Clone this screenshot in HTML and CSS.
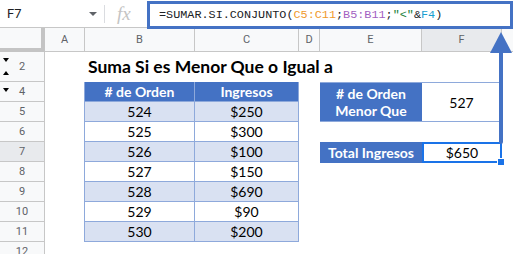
FILE: index.html
```html
<!DOCTYPE html>
<html>
<head>
<meta charset="UTF-8">
<title>Suma Si es Menor Que o Igual a</title>
<link rel="stylesheet" href="styles.css">
</head>
<body>
<div class="page">
  <div class="toolbar">
    <div class="namebox">
      <span class="ref">F7</span>
      <span class="caret"></span>
    </div>
    <div class="sep"></div>
    <div class="fx">fx</div>
    <div class="formula">=SUMAR.SI.CONJUNTO(<span class="r1">C5:C11</span>;<span class="r2">B5:B11</span>;<span class="str">"&lt;"</span>&amp;<span class="r3">F4</span>)</div>
  </div>

  <div class="sheet">
    <div class="corner"></div>
    <div class="colh">A</div>
    <div class="colh">B</div>
    <div class="colh">C</div>
    <div class="colh">D</div>
    <div class="colh">E</div>
    <div class="colh active">F</div>
    <div class="colh last"></div>

    <div class="rowh r-2"><span class="tri down"></span><span class="tri up"></span>2</div>
    <div class="rowh r-4"><span class="tri down"></span>4</div>
    <div class="rowh r-5">5</div>
    <div class="rowh r-6">6</div>
    <div class="rowh r-7 active">7</div>
    <div class="rowh r-8">8</div>
    <div class="rowh r-9">9</div>
    <div class="rowh r-10">10</div>
    <div class="rowh r-11">11</div>
    <div class="rowh r-12">12</div>

    <div class="title">Suma Si es Menor Que o Igual a</div>

    <div class="tbl">
      <div class="th">
        <div># de Orden</div><div>Ingresos</div>
      </div>
      <div class="tr band"><div>524</div><div>$250</div></div>
      <div class="tr"><div>525</div><div>$300</div></div>
      <div class="tr band"><div>526</div><div>$100</div></div>
      <div class="tr"><div>527</div><div>$150</div></div>
      <div class="tr band"><div>528</div><div>$690</div></div>
      <div class="tr"><div>529</div><div>$90</div></div>
      <div class="tr band"><div>530</div><div>$200</div></div>
    </div>

    <div class="crit">
      <div class="lbl"># de Orden<br>Menor Que</div>
      <div class="val">527</div>
    </div>

    <div class="total">
      <div class="lbl">Total Ingresos</div>
      <div class="val sel">$650</div>
    </div>
  </div>

  <svg class="arrow" width="24" height="114" viewBox="0 0 24 114">
    <line x1="11" y1="18" x2="11" y2="110" stroke="#4472c4" stroke-width="4" stroke-linecap="round"/>
    <polygon points="11,0 22,21 0,21" fill="#4472c4"/>
  </svg>
</div>
</body>
</html>
```

FILE: styles.css
```css
* {
	margin: 0;
	padding: 0;
	box-sizing: border-box;
}

body {
	background: #fff;
	font-family: Roboto, "Liberation Sans", Arial, sans-serif;
	width: 513px;
	height: 254px;
	overflow: hidden;
}

.page {
	position: relative;
}

/* formula bar */
.toolbar {
	display: flex;
	align-items: center;
	height: 28px;
	border-bottom: 1px solid #c7c7c7;
}

.namebox {
	display: flex;
	align-items: center;
	width: 104px;
	padding-left: 7px;
	padding-right: 7px;
}

.ref {
	font-size: 13px;
	color: #202124;
	flex: 1;
}

.caret {
	width: 0;
	height: 0;
	border-left: 4px solid transparent;
	border-right: 4px solid transparent;
	border-top: 4px solid #5f6368;
}

.sep {
	width: 1px;
	height: 18px;
	background: #dadce0;
}

.fx {
	width: 42px;
	padding-left: 12px;
	font-family: "Liberation Serif", serif;
	font-style: italic;
	font-size: 19px;
	color: #c4c4c4;
}

.formula {
	position: relative;
	z-index: 2;
	align-self: flex-start;
	margin-top: 1px;
	width: 366px;
	height: 28px;
	border: 3px solid #4472c4;
	padding-left: 9px;
	font-family: "Liberation Mono", monospace;
	font-size: 11.8px;
	line-height: 22px;
	color: #202124;
	white-space: nowrap;
	background: #fff;
}

.r1 { color: #f09a2c; }
.r2 { color: #a25fc1; }
.str { color: #188038; }
.r3 { color: #1a9fd0; }

/* grid */
.sheet {
	display: grid;
	grid-template-columns: 45px 40px 110px 104px 21px 102px 80px 1fr;
	grid-template-rows: 24px 30px repeat(9, 20px);
}

.corner {
	background: #f8f9fa;
	border-right: 4px solid #c4c4c4;
	border-bottom: 4px solid #c4c4c4;
}

.colh {
	background: #f8f9fa;
	border-right: 1px solid #c7c7c7;
	border-bottom: 1px solid #c7c7c7;
	font-size: 11px;
	color: #5f6368;
	display: flex;
	align-items: center;
	justify-content: center;
}

.colh.active, .rowh.active {
	background: #e8eaed;
}

.colh.last {
	border-right: none;
}

.rowh {
	grid-column: 1;
	position: relative;
	background: #f8f9fa;
	border-right: 1px solid #c7c7c7;
	border-bottom: 1px solid #c7c7c7;
	font-size: 11px;
	color: #5f6368;
	display: flex;
	align-items: center;
	justify-content: center;
}

.r-2 { grid-row: 2; }
.r-4 { grid-row: 3; }
.r-5 { grid-row: 4; }
.r-6 { grid-row: 5; }
.r-7 { grid-row: 6; }
.r-8 { grid-row: 7; }
.r-9 { grid-row: 8; }
.r-10 { grid-row: 9; }
.r-11 { grid-row: 10; }
.r-12 { grid-row: 11; }

.tri {
	position: absolute;
	left: 3px;
	width: 0;
	height: 0;
	border-left: 3px solid transparent;
	border-right: 3px solid transparent;
}

.tri.down {
	top: 6px;
	border-top: 4px solid #000;
}

.tri.up {
	bottom: 6px;
	border-bottom: 4px solid #000;
}

.title {
	grid-column: 3 / 7;
	grid-row: 2;
	align-self: end;
	padding-left: 3px;
	padding-bottom: 5px;
	font-family: Lato, "Open Sans", sans-serif;
	font-weight: 700;
	font-size: 17.5px;
	line-height: 20px;
	color: #000;
	white-space: nowrap;
}

.tbl {
	grid-column: 3 / 5;
	grid-row: 3 / 11;
	margin-left: -1px;
	border-left: 1px solid #8ea9db;
	font-family: Lato, "Open Sans", sans-serif;
	font-size: 14px;
	color: #000;
}

.th, .tr {
	display: grid;
	grid-template-columns: 110px 104px;
	height: 20px;
}

.th div, .tr div {
	border-right: 1px solid #8ea9db;
	border-bottom: 1px solid #8ea9db;
	display: flex;
	align-items: center;
	justify-content: center;
}

.th {
	background: #4472c4;
	color: #fff;
	font-weight: 700;
}

.tr.band {
	background: #d9e1f2;
}

.crit, .total {
	grid-column: 6 / 8;
	display: grid;
	grid-template-columns: 102px 80px;
	font-family: Lato, "Open Sans", sans-serif;
	font-size: 14px;
}

.crit {
	grid-row: 3 / 5;
	border-top: 1px solid #8ea9db;
	border-bottom: 1px solid #8ea9db;
}

.total {
	grid-row: 6;
	border-bottom: 1px solid #8ea9db;
}

.lbl {
	background: #4472c4;
	color: #fff;
	font-weight: 700;
	display: flex;
	align-items: center;
	justify-content: center;
	text-align: center;
	line-height: 17px;
}

.val {
	display: flex;
	align-items: center;
	justify-content: center;
	border-right: 1px solid #8ea9db;
	color: #000;
}

.val.sel {
	position: relative;
	border: 2px solid #1a73e8;
}

.val.sel::after {
	content: "";
	position: absolute;
	right: -5px;
	bottom: -5px;
	width: 6px;
	height: 6px;
	background: #1a73e8;
	border: 1px solid #fff;
}

.arrow {
	position: absolute;
	left: 490px;
	top: 32px;
}
```
